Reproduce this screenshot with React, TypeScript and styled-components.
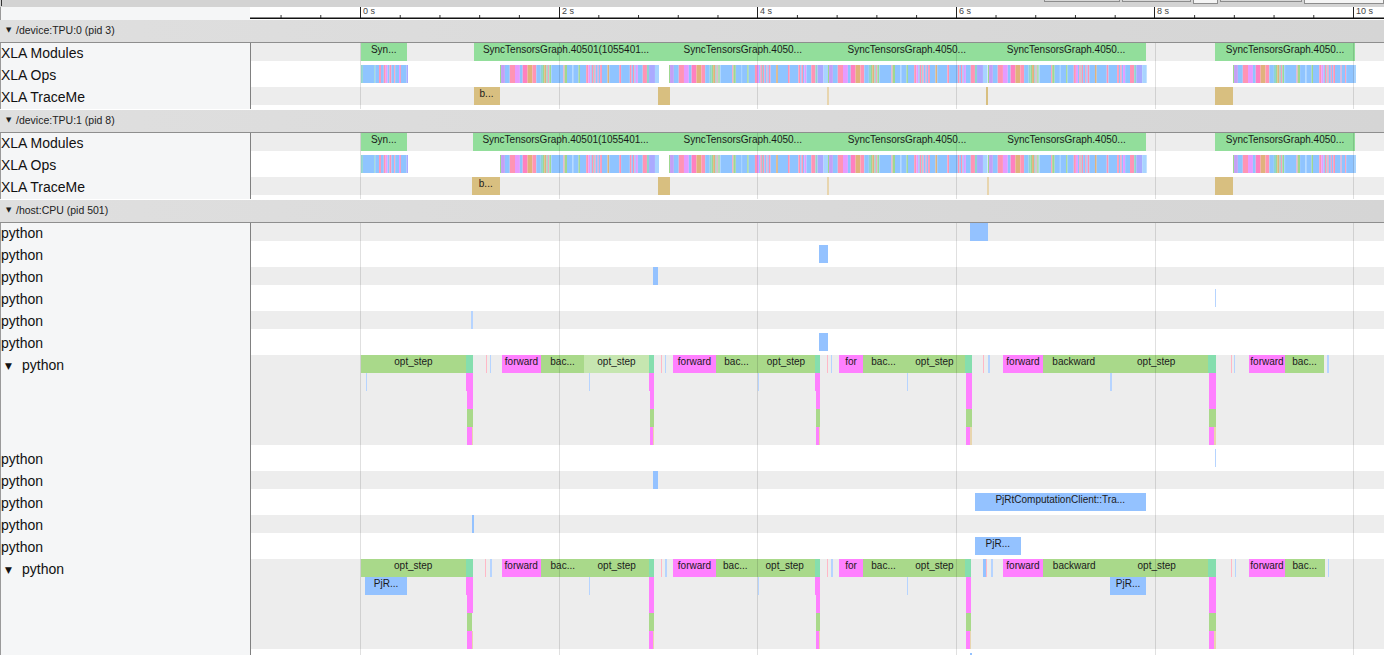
import React from "react";
import styled, { createGlobalStyle } from "styled-components";

const GlobalStyle = createGlobalStyle`
  html, body { margin: 0; padding: 0; background: #fff; }
  body { font-family: "Liberation Sans", Arial, sans-serif; overflow: hidden; }
`;

const PANEL = 250;
const ORIGIN = 251;
const TONES: Record<string, string> = {
  module: "#92de9b",
  tan: "#d8bf80",
  paleTan: "#e8d5ae",
  blue: "#94c2ff",
  paleBlue: "#b6d4ff",
  palePink: "#ffb8c6",
  green: "#a9d98a",
  paleGreen: "#c6e6b0",
  teal: "#85deae",
  magenta: "#ff80ff",
};
const GRID = [360, 559, 757, 956, 1155, 1353];

const Page = styled.div`
  width: 1384px;
  height: 655px;
  overflow: hidden;
  background: #fff;
`;
const TopBar = styled.div`
  height: 7px;
  background: #d3d3d3;
  display: flex;
  justify-content: flex-end;
  align-items: flex-start;
  gap: 2px;
  position: relative;
`;
const TopMark = styled.span`
  position: absolute;
  left: 1px;
  top: 0;
  width: 1px;
  height: 6px;
  background: #333;
`;
const TopButton = styled.div<{ $w: number; $tall?: boolean }>`
  box-sizing: border-box;
  width: ${(p) => p.$w}px;
  height: ${(p) => (p.$tall ? 4 : 2)}px;
  border: 1px solid #8d8d8d;
  border-top: none;
  background: ${(p) => (p.$tall ? "#f4f4f4" : "#d8d8d8")};
`;
const RulerRow = styled.div`
  display: grid;
  grid-template-columns: ${PANEL}px 1fr;
  height: 13px;
`;
const RulerSpacer = styled.div`
  background: #f5f6f7;
  border-left: 1px solid #9a9a9a;
`;
const RulerSvg = styled.svg`
  display: block;
  width: 1134px;
  height: 13px;
`;
const TickLabel = styled.text`
  font: 9px "Liberation Sans", Arial, sans-serif;
  fill: #444;
`;
const GroupHeader = styled.div<{ $first?: boolean }>`
  height: 20px;
  padding-bottom: 2px;
  margin-top: ${(p) => (p.$first ? 0 : 1)}px;
  border-bottom: 1px solid #8e8e8e;
  background: linear-gradient(to right, #dfdfdf, #d5d5d5);
  display: flex;
  align-items: center;
  font-size: 10.5px;
  color: #222;
`;
const GroupArrow = styled.span`
  width: 16px;
  padding-left: 6px;
  box-sizing: border-box;
  font-size: 7px;
  font-family: "DejaVu Sans", sans-serif;
`;
const Row = styled.div`
  display: grid;
  grid-template-columns: ${PANEL}px 1fr;
`;
const Label = styled.div`
  background: #f5f6f7;
  border-left: 1px solid #9a9a9a;
  font-size: 14px;
  line-height: 20px;
  color: #111;
  white-space: nowrap;
`;
const LabelArrow = styled.span`
  display: inline-block;
  width: 21px;
  padding-left: 4px;
  box-sizing: border-box;
  font-size: 9px;
  vertical-align: 1px;
  font-family: "DejaVu Sans", sans-serif;
`;
const Canvas = styled.div`
  position: relative;
  padding-bottom: 4px;
  border-left: 1px solid #808080;
  overflow: hidden;
  background: #fff;
`;
const Lane = styled.div<{ $striped: boolean }>`
  position: relative;
  height: 18px;
  background: ${(p) => (p.$striped ? "#ededed" : "#fff")};
`;
const SliceBox = styled.div<{ $tone: string }>`
  position: absolute;
  top: 0;
  bottom: 0;
  background: ${(p) => TONES[p.$tone]};
  font-size: 10px;
  line-height: 13px;
  text-align: center;
  color: #1a1a1a;
  white-space: nowrap;
  overflow: hidden;
`;
const Burst = styled.svg`
  position: absolute;
  top: 0;
  height: 18px;
  display: block;
`;
const GridLine = styled.div`
  position: absolute;
  top: 0;
  bottom: 0;
  width: 1px;
  background: rgba(0, 0, 0, 0.12);
`;

type S = [number, number, string, string?];

const Slices = ({ items }: { items: S[] }) => (
  <>
    {items.map(([a, b, tone, text], i) => (
      <SliceBox key={i} $tone={tone} style={{ left: a - ORIGIN, width: b - a }}>
        {text}
      </SliceBox>
    ))}
  </>
);

const b = "#8fc4ff", l = "#a8d4ff", p = "#ff94b4", m = "#e69bff", u = "#c4a0f5", t = "#e0b27c",
  g = "#9fd88f", c = "#8fd4d0", h = "#ff80c0", v = "#aaaaff";
const LONG: [string, number][] = [
  [g, 3], [u, 11], [b, 14], [p, 15], [m, 14], [b, 8], [h, 14], [t, 14], [p, 11], [b, 13], [c, 6], [g, 4], [t, 6], [c, 4],
  [p, 3], [c, 2], [g, 4], [l, 3], [b, 33], [p, 3], [g, 7], [b, 15], [l, 3], [b, 15], [g, 4], [b, 18], [p, 6], [m, 6],
  [b, 4], [p, 4], [c, 3], [p, 4], [b, 6], [p, 3], [b, 4], [p, 5], [b, 16], [t, 5], [b, 29], [p, 5], [b, 25], [p, 5],
  [b, 4], [p, 4], [b, 4], [m, 6], [b, 14], [p, 12], [c, 6], [v, 17], [l, 13],
];
const SHORT: [string, number][] = [
  [c, 2], [b, 12], [c, 1], [b, 4], [p, 2], [b, 3], [p, 2], [m, 2], [b, 2], [p, 2], [b, 3], [p, 1], [b, 4], [m, 1], [p, 1], [b, 6], [v, 2],
];
const TAIL: [string, number][] = LONG.slice(0, 36).concat([[b, 16], [p, 3], [b, 10], [p, 3], [b, 22], [l, 6]]);

const OpsBurst = ({ from, to, pattern }: { from: number; to: number; pattern: [string, number][] }) => {
  let x = 0;
  const total = pattern.reduce((s, e) => s + e[1], 0);
  return (
    <Burst
      viewBox={`0 0 ${total} 18`}
      preserveAspectRatio="none"
      style={{ left: from - ORIGIN, width: to - from }}
    >
      {pattern.map(([color, w], i) => {
        const rect = <rect key={i} x={x} y={0} width={w} height={18} fill={color} />;
        x += w;
        return rect;
      })}
    </Burst>
  );
};

const Grid = () => (
  <>
    {GRID.map((x) => (
      <GridLine key={x} style={{ left: x - ORIGIN }} />
    ))}
  </>
);

const Track = ({
  name,
  arrow,
  children,
}: {
  name: string;
  arrow?: boolean;
  children: React.ReactNode;
}) => (
  <Row>
    <Label>
      {arrow && <LabelArrow>▼</LabelArrow>}
      {name}
    </Label>
    <Canvas>
      {children}
      <Grid />
    </Canvas>
  </Row>
);

const Single = ({ name, striped, items }: { name: string; striped: boolean; items: S[] }) => (
  <Track name={name}>
    <Lane $striped={striped}>
      <Slices items={items} />
    </Lane>
  </Track>
);

const Ops = () => (
  <Track name="XLA Ops">
    <Lane $striped={false}>
      <OpsBurst from={360.5} to={408} pattern={SHORT} />
      <OpsBurst from={499.5} to={659} pattern={LONG} />
      <OpsBurst from={669} to={828} pattern={LONG} />
      <OpsBurst from={828} to={987.5} pattern={LONG} />
      <OpsBurst from={988.3} to={1147} pattern={LONG} />
      <OpsBurst from={1232.5} to={1355.5} pattern={TAIL} />
    </Lane>
  </Track>
);

const LEVEL_A: S[][] = [
  [
    [361, 466, "green", "opt_step"], [466, 473, "teal"], [485.5, 486.5, "palePink"], [490, 491, "paleBlue"],
    [502, 541, "magenta", "forward"], [541, 584, "green", "bac..."], [584, 649, "paleGreen", "opt_step"],
    [649, 654, "teal"], [661, 662, "palePink"], [664.5, 665.5, "paleBlue"],
    [673, 716, "magenta", "forward"], [716, 757, "green", "bac..."], [757, 815, "green", "opt_step"], [815, 820, "teal"],
    [827, 828, "palePink"], [831, 832, "paleBlue"], [839, 863, "magenta", "for"], [863, 904, "green", "bac..."],
    [904, 965, "green", "opt_step"], [965, 971.5, "teal"], [983, 984, "palePink"], [988, 989.5, "paleBlue"],
    [1003, 1043, "magenta", "forward"], [1043, 1104.5, "green", "backward"], [1104.5, 1208, "green", "opt_step"],
    [1208, 1216, "teal"], [1230.5, 1231.5, "palePink"], [1234, 1235, "paleBlue"],
    [1249, 1285, "magenta", "forward"], [1285, 1324, "green", "bac..."], [1327, 1329, "paleBlue"],
  ],
  [
    [365.5, 367, "paleBlue"], [466, 473, "magenta"], [588.5, 590, "paleBlue"], [649, 654, "magenta"],
    [757.5, 758.5, "paleBlue"], [815, 820, "magenta"], [907, 908, "paleBlue"], [965.5, 972, "magenta"],
    [1110, 1112, "paleBlue"], [1208.5, 1216, "magenta"],
  ],
  [[467, 473, "magenta"], [649.5, 654, "magenta"], [815.5, 820, "magenta"], [966, 971.5, "magenta"], [1209, 1215.5, "magenta"]],
  [[467, 473, "green"], [649.5, 654, "green"], [815.5, 820, "green"], [966, 971.5, "green"], [1209, 1215.5, "green"]],
  [
    [467, 471.5, "magenta"], [471.5, 473, "paleTan"], [649.5, 652.5, "magenta"], [652.5, 654, "paleTan"],
    [815.5, 818.5, "magenta"], [818.5, 820, "paleTan"], [966, 970, "magenta"], [970, 971.5, "paleTan"],
    [1209, 1214, "magenta"], [1214, 1215.5, "paleTan"],
  ],
];

const LEVEL_B: S[][] = [
  [
    [360.5, 466, "green", "opt_step"], [466, 472.5, "teal"], [485, 486, "palePink"], [490, 491.5, "paleBlue"],
    [502, 540.5, "magenta", "forward"], [540.5, 585, "green", "bac..."], [585, 648.5, "green", "opt_step"],
    [648.5, 654, "teal"], [661, 662, "palePink"], [665, 666.5, "paleBlue"],
    [673, 716, "magenta", "forward"], [716, 754.5, "green", "bac..."], [754.5, 815, "green", "opt_step"], [815, 820, "teal"],
    [827, 828, "palePink"], [831, 833, "paleBlue"], [839, 863, "magenta", "for"], [863, 904, "green", "bac..."],
    [904, 965, "green", "opt_step"], [965, 971, "teal"], [983, 986, "blue"], [986, 987, "palePink"], [990.5, 992.5, "paleBlue"],
    [1003, 1043, "magenta", "forward"], [1043, 1105.5, "green", "backward"], [1105.5, 1208, "green", "opt_step"],
    [1208, 1216, "teal"], [1230.5, 1231.5, "palePink"], [1235, 1236, "paleBlue"],
    [1249, 1285, "magenta", "forward"], [1285, 1324.5, "green", "bac..."], [1328, 1329, "paleBlue"],
  ],
  [
    [365, 407, "blue", "PjR..."], [466, 472.5, "magenta"], [588.5, 590, "paleBlue"], [648.5, 654, "magenta"],
    [757.5, 759, "paleBlue"], [815, 820, "magenta"], [906.5, 908, "paleBlue"], [965.5, 971, "magenta"],
    [1110, 1146, "blue", "PjR..."], [1208.5, 1216, "magenta"],
  ],
  [[467, 472.5, "magenta"], [649, 654, "magenta"], [815.5, 819.5, "magenta"], [966, 971, "magenta"], [1209, 1215.5, "magenta"]],
  [[467, 472, "green"], [649, 653.5, "green"], [815.5, 819.5, "green"], [966, 971, "green"], [1209, 1215.5, "green"]],
  [
    [467, 471.5, "magenta"], [471.5, 472.5, "paleTan"], [649, 652.5, "magenta"], [652.5, 654, "paleTan"],
    [815.5, 818.5, "magenta"], [818.5, 819.5, "paleTan"], [966, 970, "magenta"], [970, 971, "paleTan"],
    [1209, 1214, "magenta"], [1214, 1215.5, "paleTan"],
  ],
];

const Expanded = ({ levels }: { levels: S[][] }) => (
  <Track name="python" arrow>
    {levels.map((items, i) => (
      <Lane key={i} $striped>
        <Slices items={items} />
      </Lane>
    ))}
  </Track>
);

const Ruler = () => {
  const ticks: React.ReactNode[] = [];
  const stepPx = 198.6;
  const start = 110.5;
  for (let k = -1; k < 6; k++) {
    const major = start + k * stepPx;
    if (k >= 0) {
      const mx = Math.floor(major) + 0.5;
      ticks.push(<line key={`M${k}`} x1={mx} x2={mx} y1={0} y2={11} stroke="#222" strokeWidth={1} />);
      ticks.push(
        <TickLabel key={`L${k}`} x={mx + 2.5} y={7}>
          {k * 2} s
        </TickLabel>
      );
    }
    for (let j = 1; j < 5; j++) {
      const x = major + (j * stepPx) / 5;
      if (x > 0) ticks.push(<line key={`m${k}${j}`} x1={x} x2={x} y1={8} y2={11} stroke="#333" strokeWidth={1} />);
    }
  }
  return (
    <RulerSvg viewBox="0 0 1134 13">
      <rect x={0} y={0} width={1134} height={13} fill="#fff" />
      {ticks}
      <line x1={0} x2={1134} y1={11.3} y2={11.3} stroke="#111" strokeWidth={1.4} />
    </RulerSvg>
  );
};

const Device = ({ title, first, mods, trace }: { title: string; first?: boolean; mods: S[]; trace: S[] }) => (
  <>
    <GroupHeader $first={first}>
      <GroupArrow>▼</GroupArrow>
      {title}
    </GroupHeader>
    <Single name="XLA Modules" striped items={mods} />
    <Ops />
    <Single name="XLA TraceMe" striped items={trace} />
  </>
);

const sync = "SyncTensorsGraph.4050...";

export default function App() {
  return (
    <Page>
      <GlobalStyle />
      <TopBar>
        <TopMark />
        <TopButton $w={76} />
        <TopButton $w={69} />
        <TopButton $w={25} $tall />
        <TopButton $w={82} />
        <TopButton $w={80} $tall />
      </TopBar>
      <RulerRow>
        <RulerSpacer />
        <Ruler />
      </RulerRow>
      <Device
        first
        title="/device:TPU:0 (pid 3)"
        mods={[
          [360.5, 407, "module", "Syn..."],
          [474, 658, "module", "SyncTensorsGraph.40501(1055401..."],
          [658, 827.5, "module", sync],
          [827.5, 986, "module", sync],
          [986, 1146, "module", sync],
          [1215, 1355, "module", sync],
        ]}
        trace={[
          [473.5, 499.5, "tan", "b..."],
          [658, 669.5, "tan"],
          [827, 829, "paleTan"],
          [985.5, 988, "tan"],
          [1215, 1232.5, "tan"],
        ]}
      />
      <Device
        title="/device:TPU:1 (pid 8)"
        mods={[
          [360.5, 407, "module", "Syn..."],
          [473, 658, "module", "SyncTensorsGraph.40501(1055401..."],
          [658, 827.5, "module", sync],
          [827.5, 986.5, "module", sync],
          [987, 1146, "module", sync],
          [1215, 1355, "module", sync],
        ]}
        trace={[
          [472, 499.5, "tan", "b..."],
          [658, 669.5, "tan"],
          [827, 829, "paleTan"],
          [987, 988.5, "paleTan"],
          [1215, 1232.5, "tan"],
        ]}
      />
      <GroupHeader>
        <GroupArrow>▼</GroupArrow>
        /host:CPU (pid 501)
      </GroupHeader>
      <Single name="python" striped items={[[970, 988, "blue"]]} />
      <Single name="python" striped={false} items={[[819, 828, "blue"]]} />
      <Single name="python" striped items={[[652.5, 658, "blue"]]} />
      <Single name="python" striped={false} items={[[1214.5, 1216, "paleBlue"]]} />
      <Single name="python" striped items={[[471, 473, "paleBlue"]]} />
      <Single name="python" striped={false} items={[[818.5, 828, "blue"]]} />
      <Expanded levels={LEVEL_A} />
      <Single name="python" striped={false} items={[[1214.5, 1216, "paleBlue"]]} />
      <Single name="python" striped items={[[653, 658, "blue"]]} />
      <Single name="python" striped={false} items={[[974.5, 1146, "blue", "PjRtComputationClient::Tra..."]]} />
      <Single name="python" striped items={[[472, 474, "blue"]]} />
      <Single name="python" striped={false} items={[[974.5, 1021, "blue", "PjR..."]]} />
      <Expanded levels={LEVEL_B} />
      <Single name="" striped={false} items={[[970, 972, "blue"]]} />
    </Page>
  );
}
